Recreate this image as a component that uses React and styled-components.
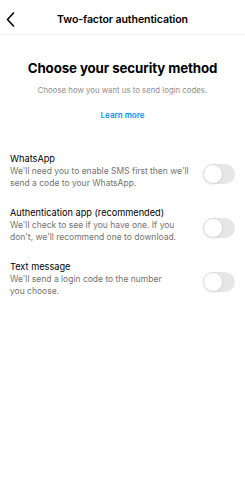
import React from 'react';
import styled, { createGlobalStyle } from 'styled-components';

const GlobalStyle = createGlobalStyle`
  html, body {
    margin: 0;
    padding: 0;
    background: #ffffff;
    font-family: Inter, "Liberation Sans", sans-serif;
    color: #000000;
  }
`;

const Page = styled.div`
  width: 245px;
  min-height: 500px;
  background: #ffffff;
`;

const Header = styled.div`
  height: 35px;
  display: grid;
  grid-template-columns: 34px 1fr 34px;
  align-items: center;
  border-bottom: 1px solid #f2f2f2;
  box-sizing: border-box;
  padding-top: 4px;
`;

const BackButton = styled.div`
  display: flex;
  align-items: center;
  padding-left: 6px;
  height: 100%;
`;

const HeaderTitle = styled.div`
  text-align: center;
  font-size: 10.6px;
  font-weight: 600;
  letter-spacing: -0.1px;
`;

const Intro = styled.div`
  display: flex;
  flex-direction: column;
  align-items: center;
  padding-top: 23px;
`;

const Title = styled.h1`
  margin: 0;
  font-size: 13.3px;
  font-weight: 700;
  letter-spacing: -0.1px;
  line-height: 20px;
`;

const Subtitle = styled.p`
  margin: 6px 0 0;
  font-size: 7.8px;
  color: #8e8e8e;
  line-height: 12px;
`;

const LearnMore = styled.a`
  margin-top: 13px;
  font-size: 8px;
  font-weight: 600;
  color: #0095f6;
  line-height: 12px;
`;

const Options = styled.div`
  display: flex;
  flex-direction: column;
  gap: 18px;
  padding: 32px 10px 0 10px;
`;

const Option = styled.div`
  display: flex;
  align-items: center;
  justify-content: space-between;
`;

const OptionText = styled.div`
  display: flex;
  flex-direction: column;
  width: ${props => props.$width}px;
`;

const OptionTitle = styled.div`
  font-size: 9.2px;
  line-height: 12px;
  color: #000000;
`;

const OptionDesc = styled.div`
  font-size: 8.5px;
  line-height: 12px;
  color: #737373;
`;

const Toggle = styled.div`
  width: 32px;
  height: 20px;
  border-radius: 10px;
  background: #e6e6e6;
  position: relative;
  margin-top: 6px;
  flex-shrink: 0;
`;

const Knob = styled.div`
  position: absolute;
  top: 0;
  left: 0;
  width: 20px;
  height: 20px;
  border-radius: 50%;
  background: #ffffff;
  box-sizing: border-box;
  border: 1px solid #dcdcdc;
  box-shadow: 0 1px 2px rgba(0, 0, 0, 0.08);
`;

const options = [
  {
    title: 'WhatsApp',
    desc: "We'll need you to enable SMS first then we'll send a code to your WhatsApp.",
    width: 182,
  },
  {
    title: 'Authentication app (recommended)',
    desc: "We'll check to see if you have one. If you don't, we'll recommend one to download.",
    width: 182,
  },
  {
    title: 'Text message',
    desc: "We'll send a login code to the number you choose.",
    width: 165,
  },
];

const App = () => (
  <Page>
    <GlobalStyle />
    <Header>
      <BackButton>
        <svg width="9" height="15" viewBox="0 0 9 15" fill="none">
          <path d="M7.5 1L1.5 7.5L7.5 14" stroke="#000" strokeWidth="1.6" strokeLinecap="round" strokeLinejoin="round" />
        </svg>
      </BackButton>
      <HeaderTitle>Two-factor authentication</HeaderTitle>
      <div />
    </Header>
    <Intro>
      <Title>Choose your security method</Title>
      <Subtitle>Choose how you want us to send login codes.</Subtitle>
      <LearnMore>Learn more</LearnMore>
    </Intro>
    <Options>
      {options.map(opt => (
        <Option key={opt.title}>
          <OptionText $width={opt.width}>
            <OptionTitle>{opt.title}</OptionTitle>
            <OptionDesc>{opt.desc}</OptionDesc>
          </OptionText>
          <Toggle>
            <Knob />
          </Toggle>
        </Option>
      ))}
    </Options>
  </Page>
);

export default App;
